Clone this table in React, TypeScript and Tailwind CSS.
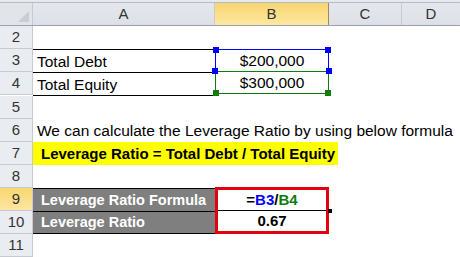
const font = { fontFamily: '"Liberation Sans", Arial, sans-serif' };

function RowHead({ n, active }: { n: number; active?: boolean }) {
  return (
    <div
      className={`flex h-[23px] w-[33px] shrink-0 items-center justify-center border-r border-b border-[#c6cbd2] text-[15px] text-[#333] ${
        active ? "bg-gradient-to-b from-[#f9d66f] to-[#fde6a2]" : "bg-[#e9edf2]"
      }`}
    >
      {n}
    </div>
  );
}

function Handle({ className }: { className: string }) {
  return <div className={`absolute h-[6px] w-[6px] ${className}`} />;
}

export default function App() {
  return (
    <div className="h-[257px] w-[460px] overflow-hidden bg-white text-[15.5px] text-black" style={font}>
      <div className="h-[3px] border-b border-[#b5bcc5] bg-[#e6e9ed]" />
      {/* column headers */}
      <div className="flex h-[23px] border-b border-[#9aa3ad] text-[15px] text-[#333]">
        <div className="relative w-[33px] shrink-0 border-r border-[#c6cbd2] bg-[#e1e5ea]">
          <div
            className="absolute right-[3px] bottom-[3px] h-0 w-0"
            style={{ borderLeft: "11px solid transparent", borderBottom: "11px solid #c9ced4" }}
          />
        </div>
        <div className="flex w-[182px] shrink-0 items-center justify-center border-r border-[#c6cbd2] bg-gradient-to-b from-[#e4e8ed] to-[#dde1e7]">A</div>
        <div className="flex w-[114px] shrink-0 items-center justify-center border-r border-[#9c8a5e] bg-gradient-to-b from-[#f8d56e] to-[#fde8a2]">B</div>
        <div className="flex w-[73px] shrink-0 items-center justify-center border-r border-[#c6cbd2] bg-gradient-to-b from-[#e4e8ed] to-[#dde1e7]">C</div>
        <div className="flex flex-1 items-center justify-center bg-gradient-to-b from-[#e4e8ed] to-[#dde1e7]">D</div>
      </div>

      {/* row 2 */}
      <div className="flex">
        <RowHead n={2} />
        <div className="h-[23px] flex-1" />
      </div>

      {/* rows 3-4 */}
      <div className="flex">
        <div className="flex flex-col">
          <RowHead n={3} />
          <RowHead n={4} />
        </div>
        <div className="w-[182px] shrink-0 border-t border-black">
          <div className="flex h-[23px] items-center border-b border-black pt-px pl-[4px]">Total Debt</div>
          <div className="flex h-[23px] items-center border-b border-black pt-px pl-[4px]">Total Equity</div>
        </div>
        <div className="relative w-[114px] shrink-0">
          <div className="relative flex h-[23px] items-center justify-center border border-[#0000ff] pt-px">
            $200,000
            <Handle className="-left-[3px] -top-[3px] bg-[#0000ff]" />
            <Handle className="-right-[3px] -top-[3px] bg-[#0000ff]" />
          </div>
          <div className="relative -mt-px flex h-[23px] items-center justify-center border border-[#107c10] pt-px">
            $300,000
            <Handle className="-left-[3px] -bottom-[3px] bg-[#107c10]" />
            <Handle className="-right-[3px] -bottom-[3px] bg-[#107c10]" />
          </div>
          <Handle className="left-[-3px] top-[19px] bg-[#0000ff]" />
          <Handle className="right-[-3px] top-[19px] bg-[#0000ff]" />
        </div>
      </div>

      {/* row 5 */}
      <div className="flex">
        <RowHead n={5} />
        <div className="h-[23px] flex-1" />
      </div>

      {/* row 6 */}
      <div className="flex">
        <RowHead n={6} />
        <div className="flex h-[23px] flex-1 items-center whitespace-nowrap pt-px pl-[4px]">
          We can calculate the Leverage Ratio by using below formula
        </div>
      </div>

      {/* row 7 */}
      <div className="flex">
        <RowHead n={7} />
        <div className="flex h-[23px] w-[305px] items-center whitespace-nowrap bg-[#ffff00] pt-px pl-[8px] text-[15px] font-bold">
          Leverage Ratio = Total Debt / Total Equity
        </div>
      </div>

      {/* row 8 */}
      <div className="flex">
        <RowHead n={8} />
        <div className="h-[23px] flex-1" />
      </div>

      {/* rows 9-10 */}
      <div className="flex">
        <div className="flex flex-col">
          <RowHead n={9} active />
          <RowHead n={10} />
        </div>
        <div className="w-[182px] shrink-0 border-t border-black bg-[#7f7f7f] text-[14.5px] font-bold text-white">
          <div className="flex h-[23px] items-center border-b border-black pt-px pl-[8px]">Leverage Ratio Formula</div>
          <div className="flex h-[22px] items-center border-b border-black pt-px pl-[8px]">Leverage Ratio</div>
        </div>
        <div className="relative -mt-px w-[114px] shrink-0 border-[3px] border-[#e3000f] text-[15px] font-bold">
          <div className="flex h-[21px] items-center justify-center border-b border-black pt-px">
            =<span className="text-[#0000ff]">B3</span>/<span className="text-[#107c10]">B4</span>
          </div>
          <div className="flex h-[20px] items-center justify-center pt-px">0.67</div>
          <div className="absolute -right-[6px] top-[19px] h-[4px] w-[4px] bg-black" />
        </div>
      </div>

      {/* row 11 */}
      <div className="flex">
        <RowHead n={11} />
        <div className="h-[23px] flex-1" />
      </div>
    </div>
  );
}
